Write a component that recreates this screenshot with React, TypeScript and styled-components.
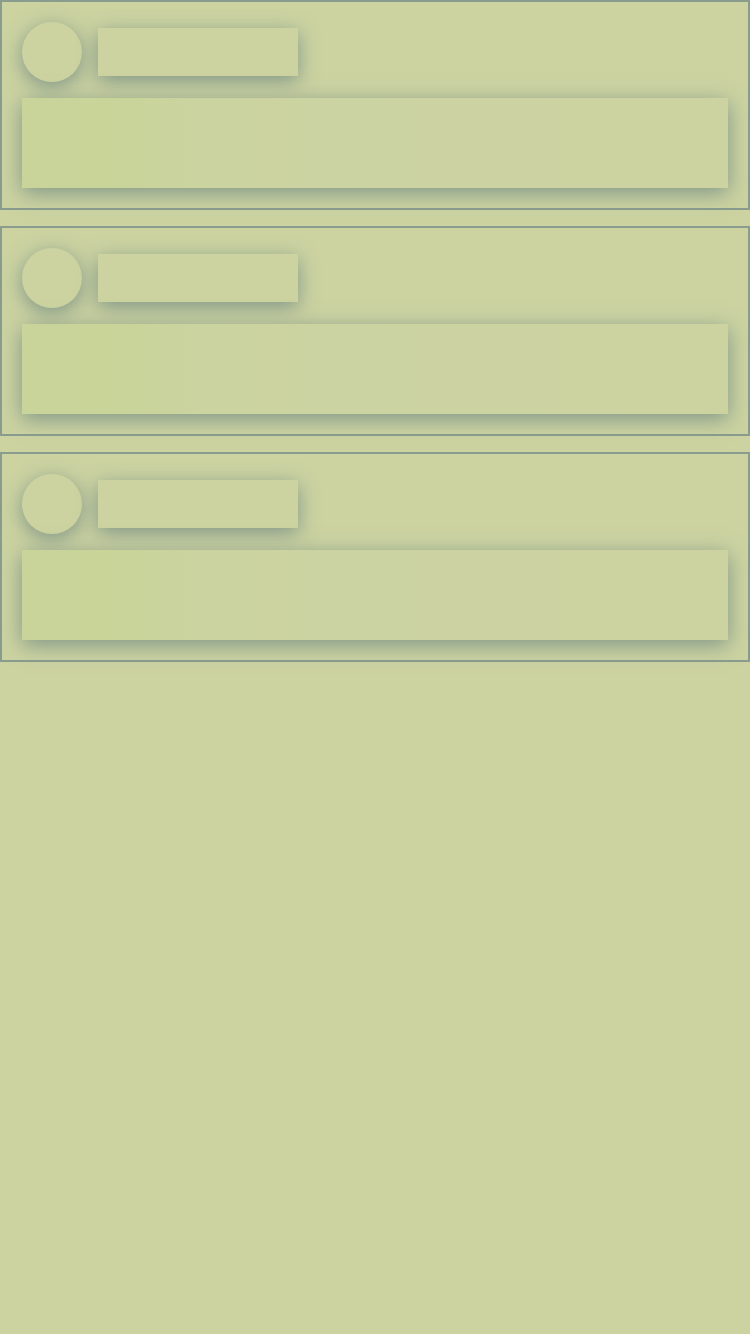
import styled, { createGlobalStyle } from "styled-components";

const GlobalStyle = createGlobalStyle`
  html, body {
    margin: 0;
    padding: 0;
    background-color: #ccd3a1;
    font-family: "Liberation Sans", Arial, sans-serif;
  }
`;

const StPage = styled.div`
  display: flex;
  flex-direction: column;
  gap: 16px;
  width: 750px;
  min-height: 1334px;
  background-color: #ccd3a1;
`;

const StCard = styled.div`
  display: flex;
  flex-direction: column;
  gap: 16px;
  padding: 20px;
  border: 2px solid #8a9c8e;
  box-sizing: border-box;
  height: 210px;
`;

const StHeader = styled.div`
  display: flex;
  align-items: center;
  gap: 16px;
`;

const shadow = "0 5px 20px rgba(110, 135, 130, 0.8)";

const StAvatar = styled.div`
  width: 60px;
  height: 60px;
  border-radius: 50%;
  background-color: #ccd3a1;
  box-shadow: ${shadow};
`;

const StTitle = styled.div`
  width: 200px;
  height: 48px;
  background-color: #ccd3a1;
  box-shadow: ${shadow};
`;

const StBody = styled.div`
  height: 90px;
  background: linear-gradient(
    90deg,
    #c9d49b 0%,
    #c8d498 12%,
    #cbd3a0 25%,
    #ccd3a2 45%,
    #ccd3a1 100%
  );
  box-shadow: ${shadow};
`;

const SkeletonCard = () => (
  <StCard>
    <StHeader>
      <StAvatar />
      <StTitle />
    </StHeader>
    <StBody />
  </StCard>
);

const App = () => {
  return (
    <>
      <GlobalStyle />
      <StPage>
        {[0, 1, 2].map((i) => (
          <SkeletonCard key={i} />
        ))}
      </StPage>
    </>
  );
};

export default App;
